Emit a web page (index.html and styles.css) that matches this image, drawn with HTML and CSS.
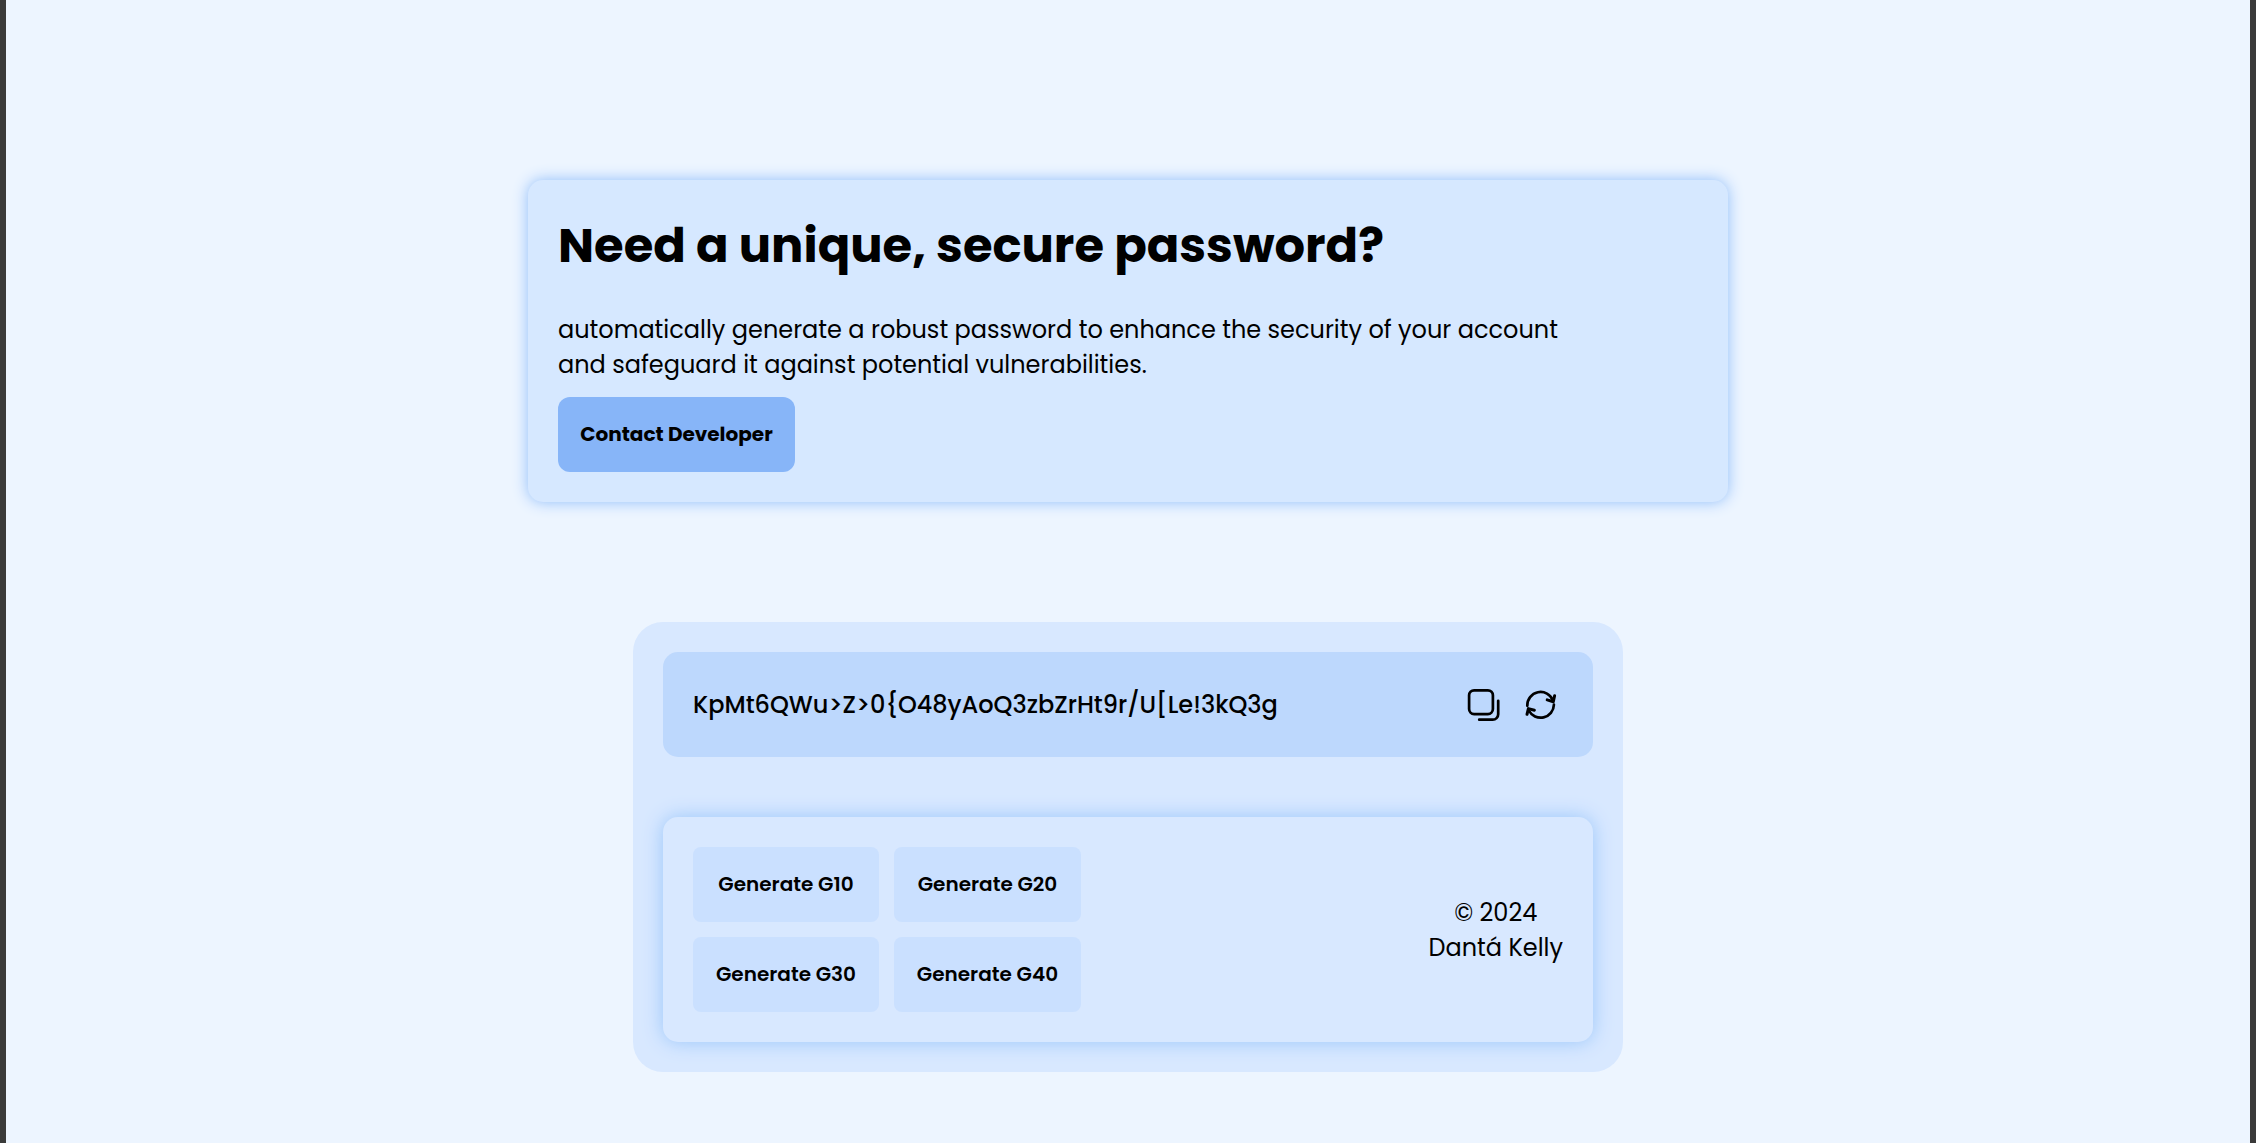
FILE: index.html
```html
<!DOCTYPE html>
<html lang="en">
<head>
<meta charset="utf-8">
<title>Password Generator</title>
<link rel="stylesheet" href="styles.css">
</head>
<body>
<main class="page">
  <section class="hero">
    <h1 class="hero-title">Need a unique, secure password?</h1>
    <p class="hero-text">automatically generate a robust password to enhance the security of your account<br>and safeguard it against potential vulnerabilities.</p>
    <button class="contact">Contact Developer</button>
  </section>
  <section class="generator">
    <div class="output">
      <span class="password">KpMt6QWu&gt;Z&gt;0{O48yAoQ3zbZrHt9r/U[Le!3kQ3g</span>
      <div class="actions">
        <svg class="icon" width="36" height="36" viewBox="0 0 36 36"><rect x="3.1" y="3.3" width="23.8" height="23.8" rx="5"/><path d="M32.200 13.800V27.200a5.500 5.500 0 0 1-5.500 5.500H13.200"/></svg>
        <svg class="icon" width="36" height="36" viewBox="0 0 36 36"><path d="M3.300 18.800A13.300 13.300 0 0 1 29 13.500M29.900 17.700A13.300 13.300 0 0 1 4.800 23.500"/><path class="arrow" d="M30.600 8.800L29.300 14.700L23.200 12.900M3 27.300L4.400 21.600L10.400 23.200"/></svg>
      </div>
    </div>
    <div class="controls">
      <div class="lengths">
        <button class="length">Generate G10</button>
        <button class="length">Generate G20</button>
        <button class="length">Generate G30</button>
        <button class="length">Generate G40</button>
      </div>
      <p class="credit">© 2024<br>Dantá Kelly</p>
    </div>
  </section>
</main>
</body>
</html>
```
FILE: styles.css
```css
* { box-sizing: border-box; margin: 0; }

body {
  background: #edf5ff;
  color: #000;
  font-family: Poppins, Inter, sans-serif;
  font-size: 24px;
  line-height: 35px;
}

.page {
  display: flex;
  flex-direction: column;
  align-items: center;
  gap: 120px;
  height: 1143px;
  padding-top: 180px;
  border: solid #3a3a3a;
  border-width: 0 6px;
}

.hero {
  width: 1200px;
  height: 322px;
  padding: 30px;
  border-radius: 15px;
  background: #d6e8ff;
  box-shadow: 0 0 15px #8fbdf9;
}

.hero-title {
  height: 102px;
  font-size: 48px;
  font-weight: 700;
  line-height: 72px;
}

.hero-text { height: 85px; }

button {
  display: flex;
  align-items: center;
  justify-content: center;
  border: 0;
  padding: 0;
  color: #000;
  font: inherit;
  font-size: 20px;
  white-space: nowrap;
}

.contact {
  width: 237px;
  height: 75px;
  border-radius: 12px;
  background: #87b5f8;
  font-weight: 700;
}

.generator {
  display: flex;
  flex-direction: column;
  gap: 60px;
  width: 990px;
  height: 450px;
  padding: 30px;
  border-radius: 30px;
  background: #d8e8ff;
}

.output {
  display: flex;
  align-items: center;
  justify-content: space-between;
  height: 105px;
  padding: 0 33px 0 30px;
  border-radius: 15px;
  background: #bdd8fd;
}

.password { font-weight: 500; }

.actions { display: flex; gap: 22px; }

.icon {
  fill: none;
  stroke: #000;
  stroke-width: 2.700;
  stroke-linecap: round;
  stroke-linejoin: round;
}

.arrow { stroke-width: 3; }

.controls {
  display: flex;
  align-items: center;
  justify-content: space-between;
  height: 225px;
  padding: 30px;
  border-radius: 15px;
  background: #d8e8ff;
  box-shadow: 0 0 20px #9ac6fa;
}

.lengths {
  display: grid;
  grid-template-columns: 186px 187px;
  gap: 15px;
}

.length {
  height: 75px;
  border-radius: 8px;
  background: #cae0ff;
  font-weight: 600;
}

.credit { text-align: center; }
```
